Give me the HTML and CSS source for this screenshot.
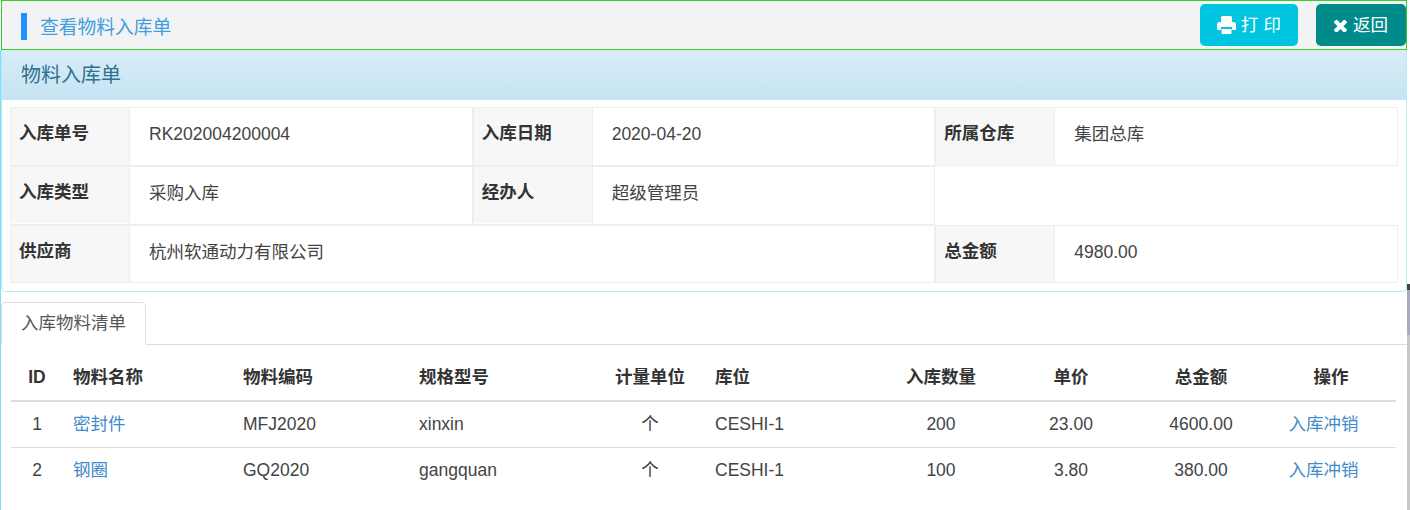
FILE: index.html
```html
<!DOCTYPE html>
<html lang="zh-CN">
<head>
<meta charset="utf-8">
<title>查看物料入库单</title>
<link rel="stylesheet" href="styles.css">
</head>
<body>
<div class="shell">
  <main class="main">
    <header class="topbar">
      <div class="topbar-title"><span class="title-mark"></span><span class="title-text">查看物料入库单</span></div>
      <div class="topbar-actions">
        <a class="btn btn-print"><svg class="icon-print" viewBox="0 0 19 18"><path fill="currentColor" d="M4 1.5A1.5 1.5 0 0 1 5.500 0h8A1.500 1.500 0 0 1 15 1.500V6h1.500A2.500 2.500 0 0 1 19 8.500V13a1 1 0 0 1-1 1h-3v-3H4v3H1a1 1 0 0 1-1-1V8.500A2.500 2.500 0 0 1 2.500 6H4z"/><path fill="currentColor" d="M4.500 13h10v4a1 1 0 0 1-1 1h-8a1 1 0 0 1-1-1z"/></svg><span class="print-label">打印</span></a>
        <a class="btn btn-back"><svg class="icon-times" viewBox="300 300 1200 1200"><path fill="currentColor" d="M1490 1322q0 40-28 68l-136 136q-28 28-68 28t-68-28l-294-294-294 294q-28 28-68 28t-68-28l-136-136q-28-28-28-68t28-68l294-294-294-294q-28-28-28-68t28-68l136-136q28-28 68-28t68 28l294 294 294-294q28-28 68-28t68 28l136 136q28 28 28 68t-28 68l-294 294 294 294q28 28 28 68z"/></svg><span>返回</span></a>
      </div>
    </header>
    <div class="content">
      <section class="panel">
        <h2 class="panel-heading">物料入库单</h2>
        <div class="panel-body">
          <div class="info-grid">
            <div class="info"><div class="info-label">入库单号</div><div class="info-value">RK202004200004</div></div>
            <div class="info"><div class="info-label">入库日期</div><div class="info-value">2020-04-20</div></div>
            <div class="info"><div class="info-label">所属仓库</div><div class="info-value">集团总库</div></div>
            <div class="info"><div class="info-label info-label-short">入库类型</div><div class="info-value">采购入库</div></div>
            <div class="info"><div class="info-label info-label-short">经办人</div><div class="info-value">超级管理员</div></div>
            <div class="info-empty"></div>
            <div class="info info-wide"><div class="info-label">供应商</div><div class="info-value">杭州软通动力有限公司</div></div>
            <div class="info"><div class="info-label">总金额</div><div class="info-value">4980.00</div></div>
          </div>
        </div>
      </section>
      <nav class="tabs"><span class="tab">入库物料清单</span></nav>
      <div class="table-wrap">
        <table class="items">
          <colgroup>
            <col class="c-id"><col class="c-name"><col class="c-code"><col class="c-spec"><col class="c-unit"><col class="c-loc"><col class="c-num"><col class="c-num"><col class="c-num"><col class="c-num">
          </colgroup>
          <thead>
            <tr><th class="ctr id">ID</th><th>物料名称</th><th>物料编码</th><th>规格型号</th><th class="ctr">计量单位</th><th>库位</th><th class="ctr">入库数量</th><th class="ctr">单价</th><th class="ctr">总金额</th><th class="ctr">操作</th></tr>
          </thead>
          <tbody>
            <tr><td class="ctr id">1</td><td><a class="link">密封件</a></td><td>MFJ2020</td><td>xinxin</td><td class="ctr">个</td><td>CESHI-1</td><td class="ctr">200</td><td class="ctr">23.00</td><td class="ctr">4600.00</td><td class="ctr"><a class="link link-action">入库冲销</a></td></tr>
            <tr><td class="ctr id">2</td><td><a class="link">钢圈</a></td><td>GQ2020</td><td>gangquan</td><td class="ctr">个</td><td>CESHI-1</td><td class="ctr">100</td><td class="ctr">3.80</td><td class="ctr">380.00</td><td class="ctr"><a class="link link-action">入库冲销</a></td></tr>
          </tbody>
        </table>
      </div>
    </div>
  </main>
  <div class="edge"></div>
</div>
</body>
</html>
```

FILE: styles.css
```css
* { box-sizing: border-box; }
html, body { margin: 0; height: 510px; overflow: hidden; background: #fff; }
body {
  font-family: "Liberation Sans", "Noto Sans CJK SC", sans-serif;
  font-size: 17.5px;
  line-height: 25px;
  color: #333;
}
.shell { display: flex; width: 1410px; height: 510px; }
.main { width: 1407px; display: flex; flex-direction: column; }
.edge {
  width: 3px;
  background: linear-gradient(#fff 0, #fff 284px, #444 284px, #444 290px, #a9a9c0 290px, #a9a9c0 335px, #c8c8c8 335px, #c8c8c8 510px);
}

.topbar {
  height: 50px;
  margin-left: 1px;
  border: 1px solid #32cd32;
  background: #f3f3f3;
  display: flex;
  justify-content: space-between;
  align-items: flex-start;
}
.topbar-title {
  display: flex;
  align-items: center;
  gap: 13px;
  margin: 12px 0 0 19px;
  font-size: 18.75px;
  color: #3d9fe0;
}
.title-text { padding-top: 2px; }
.title-mark { width: 6px; height: 27px; background: #1e90ff; }
.topbar-actions { display: flex; gap: 18px; margin-top: 3px; }
.btn {
  height: 42px;
  border-radius: 5px;
  color: #fff;
  display: flex;
  align-items: center;
  justify-content: center;
}
.btn-print { width: 98px; background: #00c5e0; }
.btn-back { width: 90px; background: #008b8b; }
.icon-print { width: 19px; height: 18px; margin-right: 5px; margin-top: -1px; }
.icon-times { width: 13px; height: 13px; margin-right: 6px; margin-top: 1px; }
.print-label { letter-spacing: 5px; margin-right: -5px; }

.content { flex: 1; border-left: 1px solid #7fdfff; }
.panel {
  height: 242px;
  border: 1px solid #bce8f1;
  border-top: 0;
  border-radius: 0 0 5px 5px;
}
.panel-heading {
  margin: 0;
  height: 50px;
  padding: 13px 19px 0;
  font-size: 20px;
  line-height: 25px;
  font-weight: 400;
  color: #31708f;
  background: linear-gradient(#d9edf7, #c4e3f3);
}
.panel-body { padding: 7px 8px 0 8px; }
.info-grid {
  display: grid;
  grid-template-columns: repeat(3, 1fr);
  grid-template-rows: 59px 59px 58px;
}
.info { display: flex; align-items: flex-start; border: 1px solid #eee; }
.info-wide { grid-column: span 2; }
.info-label {
  width: 119px;
  height: 100%;
  padding: 13px 8px 0;
  font-weight: 700;
  background: #f7f7f7;
  border-right: 1px solid #eee;
  flex: none;
}
.info-label-short { height: 56px; }
.info-value { padding: 14px 19px 0; color: #444; }

.tabs {
  height: 53px;
  padding-top: 10px;
  border-bottom: 1px solid #ddd;
  display: flex;
}
.tab {
  width: 145px;
  height: 43px;
  padding: 8px 19px 0;
  color: #555;
  background: #fff;
  border: 1px solid #ddd;
  border-bottom-color: #fff;
  border-radius: 5px 5px 0 0;
}
.table-wrap { padding: 10px 10px 0 10px; }
.items { width: 1385px; table-layout: fixed; border-collapse: collapse; }
.c-id { width: 54px; }
.c-name { width: 170px; }
.c-code { width: 176px; }
.c-spec { width: 182px; }
.c-unit { width: 114px; }
.c-loc { width: 169px; }
.c-num { width: 130px; }
.items th, .items td { padding: 10px 8px; text-align: left; }
.items th { border-bottom: 2px solid #ddd; }
.items td { border-bottom: 1px solid #ddd; color: #444; }
.items tbody tr:last-child td { border-bottom: 0; }
.items .ctr { text-align: center; }
.items .id { padding-right: 10px; }
.items .link { color: #428bca; }
.link-action { margin-right: 15px; }
```
